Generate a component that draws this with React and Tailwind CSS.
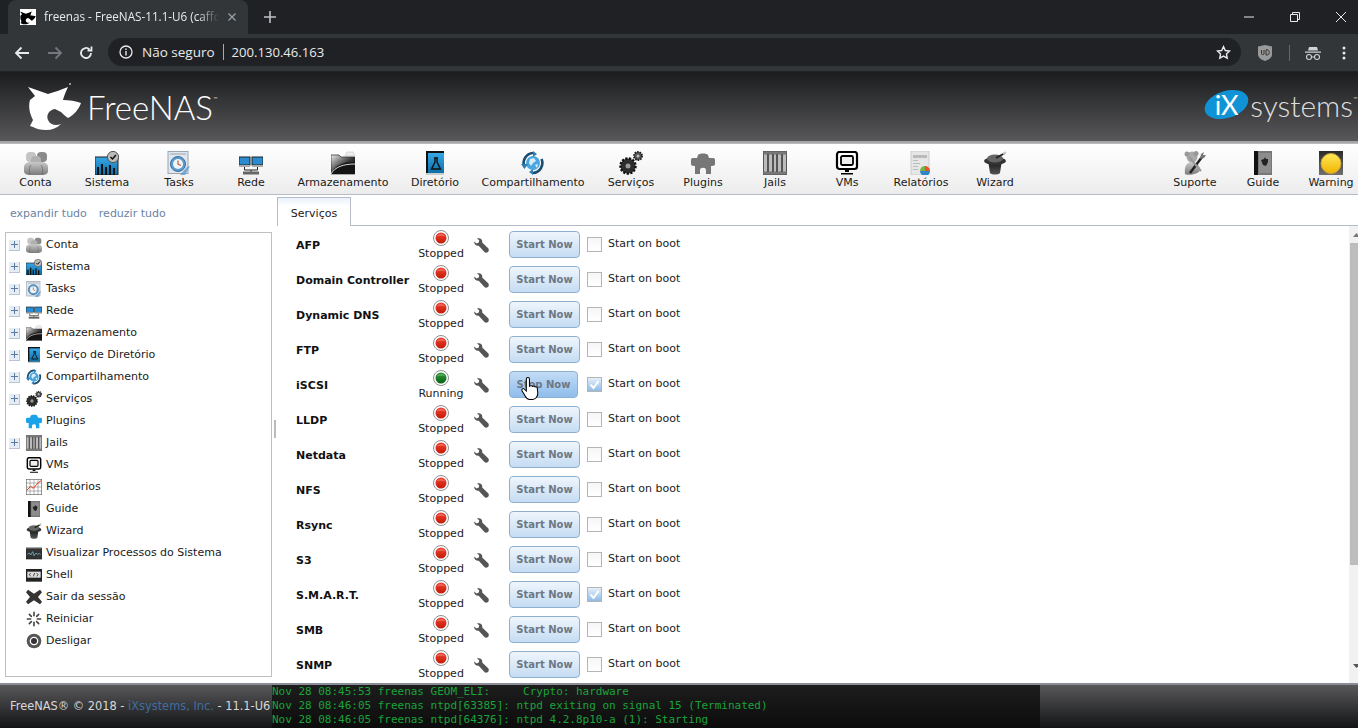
import React from 'react';

const F = '[font-family:"DejaVu_Sans",Verdana,sans-serif]';

function Defs() {
  return (
    <svg width="0" height="0" className="block w-0 h-0">
      <defs>
        <linearGradient id="gGray" x1="0" y1="0" x2="0" y2="1"><stop offset="0" stopColor="#c9c9c9" /><stop offset="1" stopColor="#7b7b7b" /></linearGradient>
        <linearGradient id="gBlue" x1="0" y1="0" x2="0" y2="1"><stop offset="0" stopColor="#38a7e6" /><stop offset="1" stopColor="#0b6ea8" /></linearGradient>
        <linearGradient id="gDark" x1="0" y1="0" x2="0" y2="1"><stop offset="0" stopColor="#111" /><stop offset="1" stopColor="#555" /></linearGradient>
        <linearGradient id="gWarn" x1="0" y1="0" x2="0" y2="1"><stop offset="0" stopColor="#2a2a2a" /><stop offset="1" stopColor="#707070" /></linearGradient>
        <linearGradient id="gFold" x1="0" y1="0" x2="1" y2="1"><stop offset="0" stopColor="#eee" /><stop offset="0.55" stopColor="#333" /><stop offset="1" stopColor="#111" /></linearGradient>
        <linearGradient id="gRed" x1="0" y1="0" x2="0" y2="1"><stop offset="0" stopColor="#f04030" /><stop offset="1" stopColor="#c41a08" /></linearGradient>
        <linearGradient id="gGreen" x1="0" y1="0" x2="0" y2="1"><stop offset="0" stopColor="#2d9a3a" /><stop offset="1" stopColor="#0b6216" /></linearGradient>
        <linearGradient id="gYel" x1="0" y1="0" x2="0" y2="1"><stop offset="0" stopColor="#ffe85a" /><stop offset="1" stopColor="#f0b400" /></linearGradient>
      </defs>
    </svg>
  );
}

const icons = {
  conta: (
    <g>
      <rect x="2" y="1" width="10" height="10" rx="4" fill="#c4c4c4" />
      <rect x="13" y="1" width="10" height="10" rx="4" fill="#8a8a8a" />
      <rect x="7" y="5" width="10" height="10" rx="4" fill="#b0b0b0" />
      <path d="M0 20v-4c0-3 3-5 6-5h12c3 0 6 2 6 5v4c0 3-3 4-6 4H6c-3 0-6-1-6-4z" fill="url(#gGray)" />
      <path d="M7 14c-2 2-2 6-1 10M17 14c2 2 2 6 1 10" fill="none" stroke="#6d6d6d" strokeWidth=".8" />
    </g>
  ),
  sistema: (
    <g>
      <rect x="0" y="6" width="23" height="18" fill="url(#gBlue)" stroke="#222" />
      <path d="M2 24v-8h2v8zM6 24v-11h2v11zM10 24v-8h2v8zM14 24v-10h2v10zM18 24v-7h2v7z" fill="#111" />
      <circle cx="18" cy="6" r="5.6" fill="#bbb" stroke="#555" />
      <path d="M15.500 6l2 2 3.400-4" fill="none" stroke="#111" strokeWidth="1.500" />
    </g>
  ),
  tasks: (
    <g>
      <rect x="1" y="0.500" width="20" height="22" fill="#dfe6ee" stroke="#9aa6b2" />
      <path d="M3 3h16" stroke="#9aa6b2" />
      <circle cx="11" cy="13" r="7.500" fill="#5b9bd0" stroke="#3f6d96" />
      <circle cx="11" cy="13" r="5" fill="#eef5fb" />
      <path d="M11 9.500V13l3 1.500" stroke="#c63" strokeWidth="1.300" fill="none" />
      <path d="M20 16l3-1-5 9h-5z" fill="#5b9bd0" opacity=".8" />
    </g>
  ),
  rede: (
    <g>
      <rect x="0" y="6" width="11" height="8" fill="#2a8cd0" stroke="#222" />
      <rect x="13" y="6" width="11" height="8" fill="#2a8cd0" stroke="#222" />
      <rect x="0" y="14" width="11" height="2" fill="#aaa" />
      <rect x="13" y="14" width="11" height="2" fill="#aaa" />
      <path d="M5.500 16v3h13v-3M12 19v2" stroke="#222" fill="none" />
      <rect x="4" y="20.500" width="16" height="3" fill="#666" />
    </g>
  ),
  arm: (
    <g>
      <path d="M14 5l2-4h6l2 4z" fill="#eee" stroke="#bbb" strokeWidth=".5" />
      <path d="M0 23V4h8l2 2h14v17z" fill="url(#gFold)" stroke="#222" strokeWidth=".7" />
      <path d="M0 23C4 14 12 11 24 11v12z" fill="#141414" />
      <path d="M0 23C4 16 12 13 24 13" stroke="#ddd" fill="none" strokeWidth="1" />
    </g>
  ),
  dir: (
    <g>
      <rect x="3" y="0" width="18" height="24" fill="#111" />
      <rect x="5" y="2" width="16" height="20" fill="url(#gBlue)" />
      <path d="M11 7h4M12 7v4l-3.500 7h9L14 11V7" fill="none" stroke="#111" strokeWidth="1.400" />
      <rect x="3" y="22" width="18" height="2" fill="#ccc" />
    </g>
  ),
  comp: (
    <g>
      <circle cx="12" cy="12" r="7" fill="#4aa6df" />
      <path d="M9 8l4-1 2 3-3 2-2 3-2-3zM14 14l3-1-1 4z" fill="#d9eefa" />
      <path d="M3.500 16A10 10 0 0 1 12 2" fill="none" stroke="#1a4d70" strokeWidth="2.600" />
      <path d="M20.500 8A10 10 0 0 1 12 22" fill="none" stroke="#1a4d70" strokeWidth="2.600" />
      <path d="M12 0l4 3-4 3z" fill="#2b7fb5" />
      <path d="M12 24l-4-3 4-3zM0 13l7 0-3.500 5z" fill="#2b7fb5" />
    </g>
  ),
  serv: (
    <g>
      <circle cx="9" cy="15" r="7.500" fill="#333" stroke="#111" strokeWidth="2.500" strokeDasharray="2.200 1.400" />
      <circle cx="9" cy="15" r="5.500" fill="#2c2c2c" />
      <circle cx="9" cy="15" r="2.500" fill="#999" />
      <circle cx="19" cy="5" r="4" fill="#555" stroke="#222" strokeWidth="2" strokeDasharray="1.500 1" />
      <circle cx="19" cy="5" r="1.500" fill="#bbb" />
    </g>
  ),
  plug: c => (
    <path d="M7 4c1-2 9-2 10 0l1 3h4c2 0 2 1 2 3v3c0 1-1 2-3 2h-1v8h-5v-4c0-3-6-3-6 0v4H4v-8H3c-2 0-3-1-3-2v-3c0-2 0-3 2-3h4z" fill={c} />
  ),
  jails: (
    <g>
      <rect x="0.500" y="0.500" width="23" height="23" fill="#bbb" stroke="#555" />
      <rect x="0.500" y="0.500" width="23" height="3" fill="#777" />
      <rect x="0.500" y="20.500" width="23" height="3" fill="#777" />
      <path d="M5 3v18M10 3v18M14 3v18M19 3v18" stroke="#555" strokeWidth="2" />
    </g>
  ),
  vms: (
    <g>
      <rect x="2" y="1" width="20" height="17" rx="2.500" fill="#fff" stroke="#000" strokeWidth="2.200" />
      <rect x="6" y="5" width="12" height="9" rx="1.500" fill="#eee" stroke="#000" strokeWidth="1.800" />
      <path d="M10 19h4v2h-4zM6 22h12v1.500H6z" fill="#000" />
    </g>
  ),
  rel: (
    <g>
      <rect x="2" y="0" width="18" height="24" fill="#e6e6e6" stroke="#ccc" />
      <path d="M4 4h14v3H4zM4 9h5v1H4zM4 12h7v1H4zM4 15h5v1H4zM4 18h5v1H4z" fill="#bbb" />
      <path d="M16 15a5 5 0 0 1 5 5h-5z" fill="#e7532b" />
      <path d="M21 20a5 5 0 0 1-10 0z" fill="#2e86c9" />
      <path d="M11 20a5 5 0 0 1 5-5v5z" fill="#79b041" />
    </g>
  ),
  relTree: (
    <g>
      <rect x="0.500" y="0.500" width="23" height="23" fill="#fff" stroke="#666" />
      <path d="M0 6h24M0 12h24M0 18h24M6 0v24M12 0v24M18 0v24" stroke="#777" strokeWidth=".8" />
      <path d="M1 17l6-6 4 3 6-7 6-5" fill="none" stroke="#e33a1f" strokeWidth="1.500" />
    </g>
  ),
  wiz: (
    <g>
      <path d="M5 9h14l-2 13c-2 2-8 2-10 0z" fill="url(#gDark)" />
      <ellipse cx="12" cy="10" rx="11" ry="4" fill="#333" />
      <ellipse cx="12" cy="7.500" rx="8" ry="4" fill="#666" />
      <path d="M13 7l9-5" stroke="#222" strokeWidth="2" />
      <path d="M20 3l3-2" stroke="#ccc" strokeWidth="2" />
    </g>
  ),
  sup: (
    <g>
      <circle cx="9" cy="6" r="5.500" fill="#aaa" />
      <circle cx="4" cy="3" r="2.500" fill="#999" /><circle cx="13" cy="2.500" r="2.500" fill="#999" />
      <path d="M2 23c-1-8 2-12 7-12s8 4 8 8c0 4-13 6-15 4z" fill="url(#gGray)" />
      <path d="M7 22L19 6" stroke="#222" strokeWidth="2.500" />
      <path d="M17 8l1-5 3-2-1 3 3 0-2 3z" fill="#777" />
      <path d="M6 6l12 14" stroke="#999" strokeWidth="2" />
    </g>
  ),
  guide: (
    <g>
      <rect x="3" y="0" width="18" height="24" fill="#777" />
      <rect x="3" y="0" width="4" height="24" fill="#111" />
      <rect x="8" y="2" width="12" height="20" fill="#8d8d8d" />
      <path d="M10 9l3-1 1-2 1 2 2 0 0 3-2 4-3-1z" fill="#222" />
    </g>
  ),
  warn: (
    <g>
      <rect x="0" y="0" width="24" height="24" fill="url(#gWarn)" />
      <circle cx="12" cy="12.500" r="10" fill="url(#gYel)" stroke="#c9a43a" />
    </g>
  ),
  proc: (
    <g>
      <rect x="0" y="4" width="24" height="17" fill="#333" stroke="#222" />
      <rect x="0" y="3" width="24" height="2" fill="#aaa" />
      <path d="M2 14l3-2 2 3 3-5 2 6 3-4 2 2 3-1 2 1" fill="none" stroke="#7cc6d8" strokeWidth="1.100" />
    </g>
  ),
  shell: (
    <g>
      <rect x="0" y="3" width="24" height="19" fill="#222" />
      <rect x="2" y="7" width="20" height="9" fill="#ddd" />
      <path d="M7 9l-2 2.500L7 14M11 14l2-5M16 9l2 2.500L16 14" stroke="#222" fill="none" strokeWidth="1.200" />
    </g>
  ),
  sair: <path d="M3 1l9 6 9-6 3 4-6 7 6 7-3 4-9-6-9 6-3-4 6-7-6-7z" fill="#333" />,
  rein: (
    <g stroke="#444" strokeWidth="2.400" strokeLinecap="round">
      <path d="M12 2v5M12 17v5M2 12h5M17 12h5M5 5l3 3M16 16l3 3M5 19l3-3M16 8l3-3" />
    </g>
  ),
  desl: (
    <g>
      <circle cx="12" cy="12" r="11" fill="#555" />
      <circle cx="12" cy="12" r="6.500" fill="#fff" />
      <circle cx="12" cy="12" r="4.500" fill="#333" />
    </g>
  ),
};

function Ico({ name, size = 24, color = '#888' }) {
  const c = icons[name];
  return (
    <svg viewBox="0 0 24 24" width={size} height={size} className="block shrink-0">
      {typeof c === 'function' ? c(color) : c}
    </svg>
  );
}

const navL = [
  ['Conta', 'conta', 'w-[71px]'],
  ['Sistema', 'sistema', 'w-[72px]'],
  ['Tasks', 'tasks', 'w-[72px]'],
  ['Rede', 'rede', 'w-[72px]'],
  ['Armazenamento', 'arm', 'w-[112px]'],
  ['Diretório', 'dir', 'w-[72px]'],
  ['Compartilhamento', 'comp', 'w-[124px]'],
  ['Serviços', 'serv', 'w-[72px]'],
  ['Plugins', 'plug', 'w-[72px]'],
  ['Jails', 'jails', 'w-[72px]'],
  ['VMs', 'vms', 'w-[72px]'],
  ['Relatórios', 'rel', 'w-[76px]'],
  ['Wizard', 'wiz', 'w-[72px]'],
];
const navR = [
  ['Suporte', 'sup', 'w-[68px]'],
  ['Guide', 'guide', 'w-[68px] mr-[7px]'],
  ['Warning', 'warn', 'w-[54px]'],
];

function NavItem({ label, icon, w }) {
  return (
    <div className={`${w} flex flex-col items-center pt-[7px] shrink-0`}>
      <Ico name={icon} size={24} color="#777" />
      <span className="text-[11px] leading-[15px] text-[#1a1a1a] whitespace-nowrap">{label}</span>
    </div>
  );
}

const tree = [
  ['Conta', 'conta', 1],
  ['Sistema', 'sistema', 1],
  ['Tasks', 'tasks', 1],
  ['Rede', 'rede', 1],
  ['Armazenamento', 'arm', 1],
  ['Serviço de Diretório', 'dir', 1],
  ['Compartilhamento', 'comp', 1],
  ['Serviços', 'serv', 1],
  ['Plugins', 'plug', 0, '#1aa3e8'],
  ['Jails', 'jails', 1],
  ['VMs', 'vms', 0],
  ['Relatórios', 'relTree', 0],
  ['Guide', 'guide', 0],
  ['Wizard', 'wiz', 0],
  ['Visualizar Processos do Sistema', 'proc', 0],
  ['Shell', 'shell', 0],
  ['Sair da sessão', 'sair', 0],
  ['Reiniciar', 'rein', 0],
  ['Desligar', 'desl', 0],
];

function TreeRow({ label, icon, exp, color }) {
  return (
    <div className="h-[22px] flex items-center">
      <div className="w-[20px] flex justify-start pl-[3px] shrink-0">
        {exp ? (
          <div className="w-[11px] h-[11px] bg-[#e6ecf4] border-b border-r border-[#b9c4d4] flex items-center justify-center">
            <svg width="7" height="7" viewBox="0 0 7 7"><path d="M3.500 0v7M0 3.500h7" stroke="#5d7aa0" strokeWidth="1" /></svg>
          </div>
        ) : null}
      </div>
      <Ico name={icon} size={16} color={color} />
      <span className="ml-[4px] text-[11px] leading-[14px] -mt-[1px] text-[#1a1a1a] whitespace-nowrap">{label}</span>
    </div>
  );
}

const services = [
  ['AFP'], ['Domain Controller'], ['Dynamic DNS'], ['FTP'],
  ['iSCSI', true, true], ['LLDP'], ['Netdata'], ['NFS'], ['Rsync'], ['S3'],
  ['S.M.A.R.T.', false, true], ['SMB'], ['SNMP'],
];

function Led({ on }) {
  return (
    <svg width="16" height="16" viewBox="0 0 16 16" className="block">
      <circle cx="8" cy="8" r="7.500" fill="#fff" stroke="#8f8f8f" />
      <circle cx="8" cy="8" r="5.500" fill={on ? 'url(#gGreen)' : 'url(#gRed)'} />
      <path d="M3.500 6.500C5 3 11 3 12.500 6.500 10 5.500 6 5.500 3.500 6.500z" fill="#fff" opacity=".25" />
    </svg>
  );
}

function Wrench() {
  return (
    <svg width="15" height="15" viewBox="0 0 15 15" className="block">
      <path d="M0.300 3.600L2.500 5.400 4.800 4.500 5.200 2.300 3 .6C5.200 -.5 8 .6 8.300 3.200L8.200 4.500 14.200 10.200C15.300 11.700 14.800 13.400 13.500 14.300 12.300 15 11 14.700 10.200 13.700L4.700 7.800C2.300 8.200 -.2 6.300 .3 3.600z" fill="#555" />
    </svg>
  );
}

function ServiceRow({ name, running, boot }) {
  return (
    <div className="h-[35px] flex shrink-0 relative">
      <div className="w-[122px] pl-[19px] pt-[13px] font-bold text-[11px] leading-[14px] text-[#111] whitespace-nowrap shrink-0">{name}</div>
      <div className="w-[60px] flex flex-col items-center pt-[4px] ml-[12px] shrink-0">
        <Led on={running} />
        <span className="text-[11px] leading-[14px] mt-[1px] text-[#222]">{running ? 'Running' : 'Stopped'}</span>
      </div>
      <div className="w-[38px] pl-[3px] pt-[12px] shrink-0"><Wrench /></div>
      <div className={`${running ? 'w-[69px] bg-[linear-gradient(#c3dcf5,#8fbdec)]' : 'w-[71px] bg-[linear-gradient(#eff5fc,#c5dcf3)]'} h-[27px] mt-[5px] pb-[1px] border border-[#8eb0cf] rounded-[4px] flex items-center justify-center font-bold text-[10px] text-[#6b7885] whitespace-nowrap shrink-0`}>
        {running ? 'Stop Now' : 'Start Now'}
      </div>
      <div className={`${running ? 'ml-[9px]' : 'ml-[7px]'} mt-[11px] w-[15px] h-[15px] border border-[#b5b5b5] shrink-0 ${boot ? 'bg-[linear-gradient(#e6f0fa,#8fbbe6)]' : 'bg-[linear-gradient(#f6f6f6,#fff)]'} flex items-center justify-center`}>
        {boot ? <svg width="11" height="11" viewBox="0 0 11 11"><path d="M1.500 5.500l3 3.500 5-7" fill="none" stroke="#fff" strokeWidth="2" /></svg> : null}
      </div>
      <div className="ml-[6px] pt-[11px] text-[11px] leading-[14px] text-[#222] whitespace-nowrap">Start on boot</div>
      {running ? (
        <svg width="19" height="24" viewBox="0 0 18 23" className="absolute left-[244px] top-[11px]">
          <path d="M5 2c0-2 3-2 3 0v7l1-.5c1-.4 2 0 2 .5 1-.5 2-.2 2.400.5 1-.3 2 .2 2.100 1l.5 5c0 3-2 6-5 6H8c-2 0-3-1-4-3l-3-5c-1-2 1-3 2-2l2 2z" fill="#fff" stroke="#000" strokeWidth="1" />
        </svg>
      ) : null}
    </div>
  );
}

function Shark({ w = 54, h = 50, fill = '#fff' }) {
  return (
    <svg width={w} height={h} viewBox="0 0 54 50" className="block">
      <path fill={fill} transform="translate(0 5)" d="M0 0L20 7C26 5 33 3 40 0 38 4 36 9 35 13 41 13 48 14 53 16 51 22 46 28 40 31 37 29 35 27 33 25L27 22C21 23 18 28 20 33 22 38 28 39 33 37 29 41 24 43 18 43 13 43 8 42 5 40L2 39 5 33C2 27 0 20 2 13L7 9Z" />
      <circle cx="42" cy="2" r="1" fill="#bbb" />
    </svg>
  );
}

export default function App() {
  return (
    <div className={`w-[1358px] h-[728px] flex flex-col overflow-hidden bg-white ${F}`}>
      <Defs />
      {/* browser tab strip */}
      <div className={`h-[34px] bg-[#202124] flex items-stretch shrink-0 [font-family:"Open_Sans",sans-serif]`}>
        <div className="ml-[8px] w-[240px] bg-[#323639] rounded-t-[8px] flex items-center pl-[12px] relative shrink-0">
          <div className="w-[16px] h-[16px] bg-white flex items-center justify-center shrink-0"><Shark w={16} h={15} fill="#000" /></div>
          <span className="ml-[8px] w-[175px] overflow-hidden whitespace-nowrap text-[11.700px] text-[#e8eaed] [mask-image:linear-gradient(to_right,#000_88%,transparent)]">freenas - FreeNAS-11.1-U6 (caffd</span>
          <svg width="10" height="10" viewBox="0 0 10 10" className="ml-[8px]"><path d="M1.500 1.500l7 7M8.500 1.500l-7 7" stroke="#9aa0a6" strokeWidth="1.300" /></svg>
        </div>
        <svg width="14" height="14" viewBox="0 0 14 14" className="ml-[15px] self-center"><path d="M7 1v12M1 7h12" stroke="#bdc1c6" strokeWidth="1.600" /></svg>
        <div className="ml-auto flex items-center pr-[12px] gap-[36px]">
          <svg width="10" height="2" viewBox="0 0 10 2"><path d="M0 1h10" stroke="#e8eaed" /></svg>
          <svg width="10" height="10" viewBox="0 0 10 10"><path d="M2.500 2.500V.5h7v7h-2M.5 2.500h7v7h-7z" fill="none" stroke="#e8eaed" /></svg>
          <svg width="10" height="10" viewBox="0 0 10 10"><path d="M0 0l10 10M10 0L0 10" stroke="#e8eaed" /></svg>
        </div>
      </div>
      {/* browser toolbar */}
      <div className={`h-[38px] bg-[#323639] border-b border-[#222] flex items-center shrink-0 [font-family:"Open_Sans",sans-serif]`}>
        <svg width="16" height="14" viewBox="0 0 16 14" className="ml-[14px]"><path d="M15 7H2M7.500 1.500L2 7l5.500 5.500" fill="none" stroke="#e8eaed" strokeWidth="1.800" /></svg>
        <svg width="16" height="14" viewBox="0 0 16 14" className="ml-[17px]"><path d="M1 7h13M8.500 1.500L14 7l-5.500 5.500" fill="none" stroke="#75787c" strokeWidth="1.800" /></svg>
        <svg width="16" height="16" viewBox="0 0 16 16" className="ml-[15px]"><path d="M13 8a5 5 0 1 1-1.500-3.600M13.500 1.500v4h-4" fill="none" stroke="#e8eaed" strokeWidth="1.800" /></svg>
        <div className="ml-[14px] w-[1133px] h-[28px] rounded-full bg-[#202124] flex items-center pl-[11px] pr-[10px] text-[13.500px] shrink-0 -mt-[1px]">
          <svg width="14" height="14" viewBox="0 0 14 14"><circle cx="7" cy="7" r="6" fill="none" stroke="#e8eaed" strokeWidth="1.300" /><path d="M7 6v4.500M7 3.500v1.500" stroke="#e8eaed" strokeWidth="1.400" /></svg>
          <span className="ml-[9px] text-[#e8eaed]">Não seguro</span>
          <span className="mx-[8px] w-px h-[16px] bg-[#aaa]"></span>
          <span className="text-[#e8eaed] text-[13.100px] mt-[1px]">200.130.46.163</span>
          <svg width="15" height="15" viewBox="0 0 24 24" className="ml-auto"><path d="M12 2.500l2.900 6.300 6.800.8-5 4.700 1.300 6.800-6-3.400-6 3.400 1.300-6.800-5-4.700 6.800-.8z" fill="none" stroke="#e8eaed" strokeWidth="2.200" /></svg>
        </div>
        <svg width="16" height="18" viewBox="0 0 16 18" className="ml-[16px]"><path d="M1 2.500L8 1l7 1.500v8C15 14 11 16 8 17c-3-1-7-3-7-6.500z" fill="#999" /><path d="M4.500 6v3.500c0 1.500 2.500 1.500 2.500 0V6M9 5.800h1c3 0 3 5.200 0 5.200H9z" fill="none" stroke="#333" strokeWidth="1" /></svg>
        <span className="ml-[16px] w-px h-[16px] bg-[#666]"></span>
        <svg width="16" height="16" viewBox="0 0 16 16" className="ml-[15px]"><path d="M4 2h8l1 3.500H3zM0 6.500h16v1.200H0z" fill="#d0d2d5" /><circle cx="4" cy="12" r="2.500" fill="none" stroke="#d0d2d5" strokeWidth="1.100" /><circle cx="12" cy="12" r="2.500" fill="none" stroke="#d0d2d5" strokeWidth="1.100" /><path d="M6.500 12h3" stroke="#d0d2d5" /></svg>
        <svg width="4" height="14" viewBox="0 0 4 14" className="ml-[21px]"><circle cx="2" cy="2" r="1.500" fill="#e8eaed" /><circle cx="2" cy="7" r="1.500" fill="#e8eaed" /><circle cx="2" cy="12" r="1.500" fill="#e8eaed" /></svg>
      </div>
      {/* FreeNAS header */}
      <div className="h-[69px] bg-[linear-gradient(#1b1c1e,#58585a)] border-b-[2px] border-[#a5a5a5] flex items-center shrink-0 box-content">
        <div className="ml-[28px]"><Shark /></div>
        <span className={`ml-[5px] mt-[2px] text-[33px] leading-none text-white font-light [font-family:"Lato",sans-serif]`}>FreeNAS</span>
        <span className="text-[5px] text-white self-start mt-[24px]">™</span>
        <div className="ml-auto flex items-center">
          <div className="relative w-[45px] h-[27px] flex items-center justify-center -mt-[5px]">
            <div className="absolute inset-0 bg-[#0f93d6] rounded-[50%] -rotate-[18deg]"></div>
            <span className={`relative text-white text-[27px] leading-none font-normal [font-family:"Lato",sans-serif]`}>iX</span>
          </div>
          <span className={`ml-[1px] -mt-[4px] text-[30px] leading-none text-[#dedede] font-light [font-family:"Lato",sans-serif]`}>systems</span>
          <span className="text-[5px] text-white self-start mt-[2px]">™</span>
        </div>
      </div>
      {/* main nav toolbar */}
      <div className="h-[52px] bg-[linear-gradient(#ffffff,#ececec)] border-b border-[#b5bcc7] border-t border-t-[#bbb] flex shrink-0 box-border">
        {navL.map(([l, i, w]) => <NavItem key={l} label={l} icon={i} w={w} />)}
        <div className="ml-auto flex">
          {navR.map(([l, i, w]) => <NavItem key={l} label={l} icon={i} w={w} />)}
        </div>
      </div>
      {/* body */}
      <div className="flex-1 min-h-0 flex">
        {/* sidebar */}
        <div className="w-[272px] shrink-0 flex flex-col pb-[6px]">
          <div className="h-[37px] pl-[10px] pt-[12px] text-[11px] leading-[14px] text-[#6b84a3] flex gap-[12px]">
            <span>expandir tudo</span><span>reduzir tudo</span>
          </div>
          <div className="flex-1 ml-[5px] border border-[#c0c0c0] pt-[1px]">
            {tree.map(([l, i, e, c]) => <TreeRow key={l} label={l} icon={i} exp={e} color={c} />)}
          </div>
        </div>
        {/* splitter */}
        <div className="w-[5px] shrink-0 flex items-center justify-center pb-[30px]">
          <div className="w-[2px] h-[18px] border-l border-r border-[#bbb] mt-[10px]"></div>
        </div>
        {/* content */}
        <div className="flex-1 min-w-0 flex flex-col">
          <div className="h-[31px] flex shrink-0 pt-[2px]">
            <div className="w-[74px] h-[29px] border border-[#b5bcc7] border-b-0 bg-[linear-gradient(#eaf2fb,#fff_30%)] flex justify-center pt-[9px] text-[11px] leading-[14px] text-[#222]">Serviços</div>
            <div className="flex-1 border-b border-[#b5bcc7]"></div>
          </div>
          <div className="flex-1 min-h-0 flex">
            <div className="flex-1 min-w-0 overflow-hidden flex flex-col">
              {services.map(([n, r, b]) => <ServiceRow key={n} name={n} running={r} boot={b} />)}
            </div>
            <div className="w-[9px] bg-[#f1f1f1] flex flex-col shrink-0 overflow-hidden">
              <div className="h-[17px] flex items-center pl-[4px]"><svg width="7" height="4" viewBox="0 0 7 4" className="shrink-0"><path d="M3.500 0L7 4H0z" fill="#777" /></svg></div>
              <div className="h-[322px] ml-[1px] bg-[#bdbdbd]"></div>
              <div className="mt-auto h-[19px] flex items-start pl-[4px]"><svg width="7" height="4" viewBox="0 0 7 4" className="shrink-0"><path d="M3.500 4L7 0H0z" fill="#555" /></svg></div>
            </div>
          </div>
        </div>
      </div>
      {/* footer */}
      <div className="h-[45px] shrink-0 border-t-[2px] border-[#8a8d96] bg-[linear-gradient(#58585a,#131416)] flex box-border">
        <div className="w-[272px] shrink-0 pl-[10px] flex items-center text-[11.400px] text-[#d8d8d8] whitespace-nowrap">
          FreeNAS® © 2018 -&nbsp;<span className="text-[#3f6d9e]">iXsystems, Inc.</span>&nbsp;- 11.1-U6
        </div>
        <div className={`w-[768px] shrink-0 bg-[linear-gradient(#1d1d1d,#0c0c0c)] text-[11px] leading-[14px] tracking-[-0.015px] text-[#1aa33a] whitespace-pre [font-family:"DejaVu_Sans_Mono",monospace]`}>
          <div>Nov 28 08:45:53 freenas GEOM_ELI:     Crypto: hardware</div>
          <div>Nov 28 08:46:05 freenas ntpd[63385]: ntpd exiting on signal 15 (Terminated)</div>
          <div>Nov 28 08:46:05 freenas ntpd[64376]: ntpd 4.2.8p10-a (1): Starting</div>
        </div>
      </div>
    </div>
  );
}
